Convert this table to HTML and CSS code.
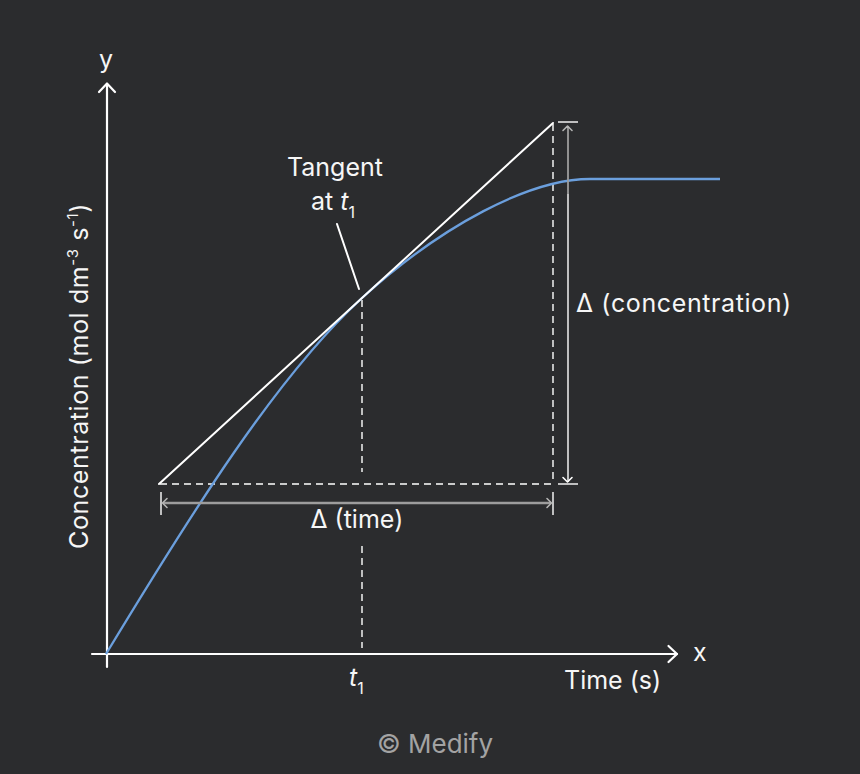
FILE: index.html
```html
<!DOCTYPE html>
<html lang="en">
<head>
<meta charset="utf-8">
<title>Tangent rate graph</title>
<link rel="stylesheet" href="styles.css">
</head>
<body>
<main class="figure">
  <svg class="plot" width="860" height="729" viewBox="0 0 860 729" xmlns="http://www.w3.org/2000/svg">
    <!-- axes -->
    <line class="axis" x1="107" y1="84" x2="107" y2="667"/>
    <polyline class="axis" points="99,92 107,83.5 115,92"/>
    <line class="axis" x1="92" y1="654" x2="677" y2="654"/>
    <polyline class="axis" points="668.5,646 677,654 668.5,662"/>
    <text class="lbl" x="106" y="68" text-anchor="middle">y</text>
    <text class="lbl" x="693" y="661">x</text>

    <!-- dashed guides -->
    <line class="dash" x1="160" y1="484" x2="553" y2="484"/>
    <line class="dash" x1="553" y1="124" x2="553" y2="484"/>
    <line class="dash" x1="362" y1="300" x2="362" y2="472"/>
    <line class="dash" x1="362" y1="546" x2="362" y2="648"/>

    <!-- curve -->
    <path class="curve" d="M106,654 C192,512 277,376 362,298 C442,225 530,179 590,179 L720,179"/>

    <!-- tangent -->
    <line class="tan" x1="159" y1="484" x2="553" y2="123"/>
    <line class="tan" x1="337" y1="224" x2="359" y2="289"/>

    <!-- delta time arrow -->
    <line class="tick" x1="161" y1="492" x2="161" y2="515"/>
    <line class="tick" x1="553" y1="492" x2="553" y2="515"/>
    <line class="garrow" x1="163" y1="503" x2="551" y2="503"/>
    <polyline class="ahead gray" points="167,498.5 162.5,503 167,507.5"/>
    <polyline class="ahead gray" points="547,498.5 551.5,503 547,507.5"/>

    <!-- delta concentration arrow -->
    <line class="tick" x1="558" y1="122" x2="578" y2="122"/>
    <line class="tick" x1="558" y1="484" x2="578" y2="484"/>
    <line class="garrow thin" x1="568" y1="126" x2="568" y2="194"/>
    <line class="warrow" x1="568" y1="194" x2="568" y2="482"/>
    <polyline class="ahead gray" points="563,130.5 567.5,126 572,130.5"/>
    <polyline class="ahead white" points="563,477.5 567.5,482 572,477.5"/>

    <!-- labels -->
    <text class="lbl" x="335" y="176" text-anchor="middle">Tangent</text>
    <text class="lbl" x="311" y="210">at <tspan class="it">t</tspan><tspan class="sub" dy="8">1</tspan></text>
    <text class="lbl wide" x="576" y="312">Δ (concentration)</text>
    <text class="lbl" x="357" y="528" text-anchor="middle">Δ (time)</text>
    <text class="lbl" x="349" y="686"><tspan class="it">t</tspan><tspan class="sub" dy="8">1</tspan></text>
    <text class="lbl" x="564" y="689">Time (s)</text>
    <text class="lbl wide" transform="translate(88,376) rotate(-90)" text-anchor="middle">Concentration (mol dm<tspan class="sup" dy="-10">-3</tspan><tspan dy="10"> s</tspan><tspan class="sup" dy="-10">-1</tspan><tspan dy="10">)</tspan></text>
  </svg>
  <p class="credit">© Medify</p>
</main>
</body>
</html>
```

FILE: styles.css
```css
html, body {
  margin: 0;
  padding: 0;
  background: #2b2c2e;
}

body {
  width: 860px;
  height: 774px;
  overflow: hidden;
  font-family: Inter, "Liberation Sans", Arial, sans-serif;
}

.figure {
  display: flex;
  flex-direction: column;
  align-items: center;
}

.plot {
  display: block;
}

.axis {
  fill: none;
  stroke: #ffffff;
  stroke-width: 2.2;
  stroke-linecap: round;
  stroke-linejoin: round;
}

.dash {
  stroke: #ffffff;
  stroke-width: 1.4;
  stroke-dasharray: 7 5;
}

.curve {
  fill: none;
  stroke: #6b9fdd;
  stroke-width: 2.3;
}

.tan {
  stroke: #ffffff;
  stroke-width: 2;
  stroke-linecap: round;
}

.tick {
  stroke: #ffffff;
  stroke-width: 1.4;
}

.garrow {
  stroke: #9d9d9d;
  stroke-width: 2.6;
}

.garrow.thin {
  stroke-width: 1.8;
}

.warrow {
  stroke: #ffffff;
  stroke-width: 1.4;
}

.ahead {
  fill: none;
  stroke-width: 1.6;
  stroke-linecap: round;
  stroke-linejoin: round;
}

.ahead.gray {
  stroke: #b5b5b5;
}

.ahead.white {
  stroke: #ffffff;
}

.lbl {
  fill: #f6f6f6;
  font-family: Inter, "Liberation Sans", Arial, sans-serif;
  font-size: 25px;
}

.lbl.wide {
  letter-spacing: 0.6px;
}

.it {
  font-style: italic;
}

.sub {
  font-size: 16px;
}

.sup {
  font-size: 15px;
}

.credit {
  margin: 0;
  padding-left: 10px;
  color: #a3a3a3;
  font-size: 26px;
  line-height: 30px;
}
```
